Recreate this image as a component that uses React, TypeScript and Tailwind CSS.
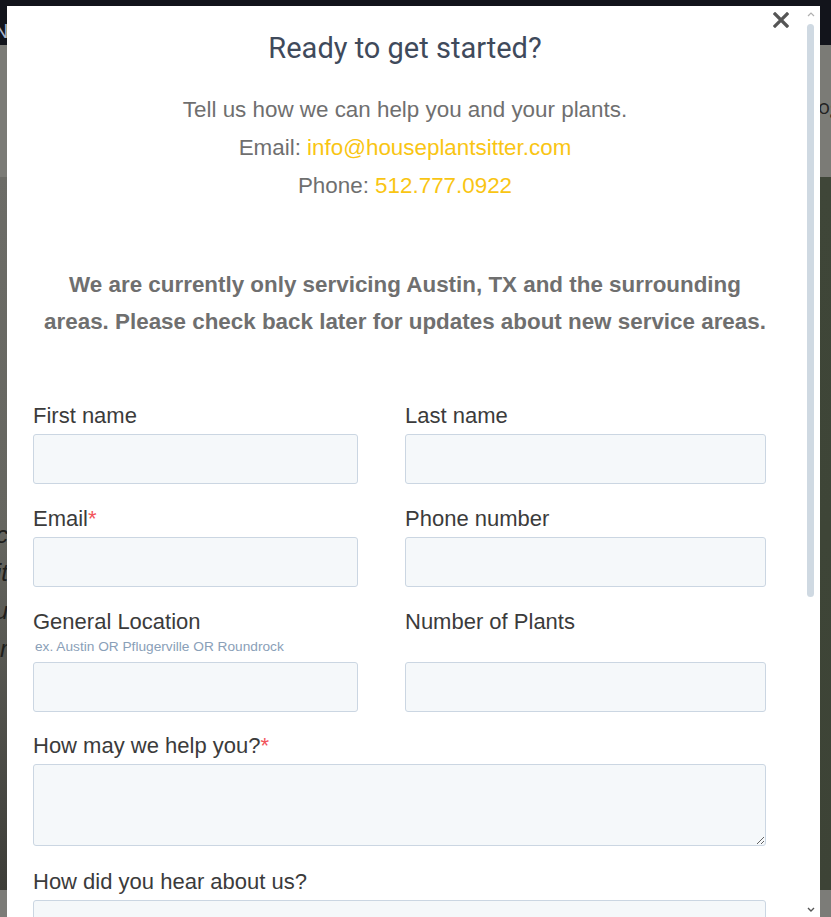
import React from "react";

const sans = { fontFamily: '"Liberation Sans", Arial, sans-serif' };

function Field({
  label,
  required,
  hint,
}: {
  label: string;
  required?: boolean;
  hint?: string;
}) {
  return (
    <div className="flex flex-col justify-between">
      <div>
        <div className="text-[22px] leading-[26px] text-[#3b3b3b]">
          {label}
          {required && <span className="text-[#f2545b]">*</span>}
        </div>
        {hint && (
          <div className="mb-[2px] mt-[4px] pl-[2px] text-[13.7px] leading-[16px] text-[#8aa0b8]">
            {hint}
          </div>
        )}
      </div>
      <div className="mt-[5px] h-[50px] rounded-[3px] border border-[#cbd6e2] bg-[#f5f8fa]" />
    </div>
  );
}

export default function App() {
  return (
    <div
      className="relative h-[917px] w-[831px] overflow-hidden bg-[#12141b]"
      style={sans}
    >
      {/* background page */}
      <div className="flex h-full flex-col">
        <div className="h-[45px] bg-[#12141b]" />
        <div className="h-[132px] bg-[#7b7b76]" />
        <div className="flex h-[713px]">
          <div className="w-[415px] bg-gradient-to-b from-[#6c6c67] via-[#65655f] to-[#3d3d38]" />
          <div className="flex-1 bg-gradient-to-b from-[#3f4638] via-[#3e4537] to-[#3d4336]" />
        </div>
        <div className="flex-1 bg-[#7c7c78]" />
      </div>
      <div className="absolute left-[-6px] top-[16px] text-[20px] text-[#aab4c8]">N</div>
      <div
        className="absolute left-[818px] top-[92px] text-[20px] text-[#222]"
        style={{ fontFamily: '"Open Sans", sans-serif' }}
      >
        og
      </div>
      <div className="absolute left-[-60px] top-[516px] w-[68px] text-right text-[24px] italic leading-[38px] text-[#1e1e1c]">
        <div>oc</div>
        <div>it</div>
        <div>ou</div>
        <div>or</div>
      </div>

      {/* modal */}
      <div className="absolute left-[7px] top-[6px] h-[930px] w-[813px] overflow-hidden bg-white">
        {/* close */}
        <svg
          className="absolute left-[766px] top-[6px]"
          width="16"
          height="16"
          viewBox="0 0 16 16"
        >
          <path
            d="M2 2 L14 14 M14 2 L2 14"
            stroke="#555"
            strokeWidth="3.2"
            strokeLinecap="square"
          />
        </svg>
        {/* scrollbar */}
        <svg className="absolute left-[799px] top-[4px]" width="10" height="8" viewBox="0 0 10 8">
          <path d="M2 6 L5 3 L8 6" stroke="#b0b0b0" strokeWidth="1.2" fill="none" />
        </svg>
        <div className="absolute left-[800px] top-[18px] h-[573px] w-[7px] rounded-full bg-[#cfd9e2]" />
        <svg className="absolute left-[799px] top-[900px]" width="10" height="8" viewBox="0 0 10 8">
          <path d="M2 2 L5 5 L8 2" stroke="#555" strokeWidth="1.4" fill="none" />
        </svg>

        <div className="pl-[26px] pt-[22px]">
          <div className="w-[744px] text-center">
            <h2
              className="text-[29px] leading-[40px] text-[#3f4a5b]"
              style={{ fontFamily: 'Roboto, "Noto Sans", sans-serif' }}
            >
              Ready to get started?
            </h2>
            <div className="mt-[23px] text-[22.4px] leading-[38px] text-[#6f6f6f]">
              <div>Tell us how we can help you and your plants.</div>
              <div>
                Email: <span className="text-[#f9c513]">info@houseplantsitter.com</span>
              </div>
              <div>
                Phone: <span className="text-[#f9c513]">512.777.0922</span>
              </div>
            </div>
            <div className="mt-[61px] whitespace-nowrap text-[22.4px] font-bold leading-[37px] text-[#6f6f6f]">
              <div>We are currently only servicing Austin, TX and the surrounding</div>
              <div>areas. Please check back later for updates about new service areas.</div>
            </div>
          </div>

          <div className="mt-[63px] w-[733px]">
            <div className="grid grid-cols-[325px_361px] gap-x-[47px] gap-y-[22px]">
              <Field label="First name" />
              <Field label="Last name" />
              <Field label="Email" required />
              <Field label="Phone number" />
              <Field
                label="General Location"
                hint="ex. Austin OR Pflugerville OR Roundrock"
              />
              <Field label="Number of Plants" />
            </div>
            <div className="mt-[21px] text-[22px] leading-[26px] text-[#3b3b3b]">
              How may we help you?<span className="text-[#f2545b]">*</span>
            </div>
            <textarea className="mt-[5px] block h-[82px] w-[733px] rounded-[3px] border border-[#cbd6e2] bg-[#f5f8fa]" />
            <div className="mt-[23px] text-[22px] leading-[26px] text-[#3b3b3b]">
              How did you hear about us?
            </div>
            <div className="mt-[5px] h-[50px] rounded-[3px] border border-[#cbd6e2] bg-[#f5f8fa] px-[18px] pt-[12px] text-[20px] text-[#a0a0a0]">
              Please Select
            </div>
          </div>
        </div>
      </div>
    </div>
  );
}
